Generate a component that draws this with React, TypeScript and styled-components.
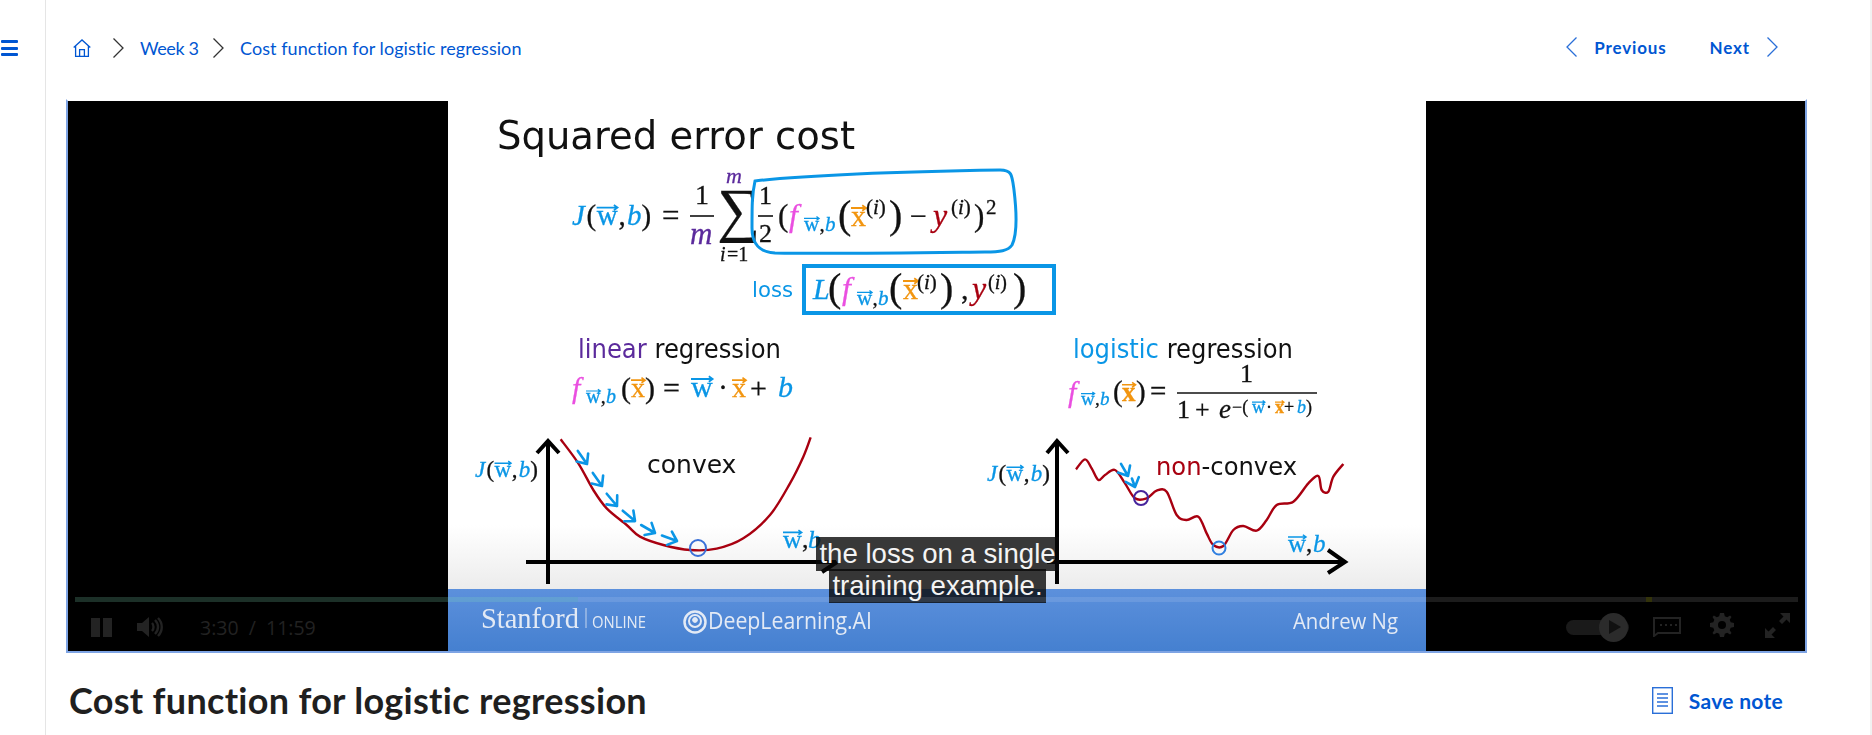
import React from 'react';
import styled, { createGlobalStyle } from 'styled-components';

const Global = createGlobalStyle`
  html, body { margin: 0; padding: 0; background: #fff; height: 735px; overflow: hidden; }
  * { box-sizing: border-box; }
`;

const BLUE = '#0056d2';
const CY = '#0a96e6';
const MAG = '#ea4fe0';
const ORG = '#f2950f';
const RED = '#a80010';
const PUR = '#5b2a9c';

const Page = styled.div`
  display: flex;
  width: 1872px;
  height: 735px;
  overflow: hidden;
  font-family: 'Lato', 'Noto Sans', sans-serif;
  border-right: 2px solid #f1f1f1;
`;
const Sidebar = styled.aside`
  width: 46px;
  flex: none;
  border-right: 1px solid #e5e5e5;
  padding: 40px 0 0 1px;
`;
const Burger = styled.div`
  width: 17px;
  height: 16px;
  display: flex;
  flex-direction: column;
  justify-content: space-between;
  & > i { display: block; height: 3px; background: ${BLUE}; border-radius: 1px; }
`;
const Main = styled.main`
  flex: 1;
  padding: 0 63px 0 20px;
  min-width: 0;
`;
const TopBar = styled.nav`
  height: 99px;
  display: flex;
  align-items: center;
  justify-content: space-between;
  padding: 0 29px 3px 7px;
`;
const Crumbs = styled.div`
  display: flex;
  align-items: center;
  font-size: 18px;
  color: ${BLUE};
`;
const CrumbText = styled.span<{ $w: number; $ls: number }>`
  width: ${p => p.$w}px;
  letter-spacing: ${p => p.$ls}px;
  white-space: nowrap;
`;
const Sep = styled.svg<{ $ml: number }>`
  width: 11px;
  height: 20px;
  margin: 0 16px 0 ${p => p.$ml}px;
  flex: none;
`;
const Pager = styled.div`
  display: flex;
  align-items: center;
  margin-bottom: 2px;
  color: ${BLUE};
  font-size: 17px;
  font-weight: 700;
  letter-spacing: 0.85px;
`;
const PagerLink = styled.span<{ $gap?: number }>`
  display: flex;
  align-items: center;
  gap: 17px;
  margin-left: ${p => p.$gap ?? 0}px;
`;
const Frame = styled.section`
  position: relative;
  height: 554px;
  background: #000;
  border: 2px solid #7ea4e4;
  border-top-color: #fff;
  display: flex;
  justify-content: center;
  overflow: hidden;
`;
const Slide = styled.svg`
  width: 978px;
  height: 550px;
  flex: none;
  display: block;
  filter: blur(0.35px);
`;
const Caption = styled.div`
  position: absolute;
  left: 2px;
  right: 0;
  bottom: 50px;
  text-align: center;
  font: 27.6px/31.5px 'Liberation Sans', Arial, sans-serif;
  color: #f4f4f4;
  & > span {
    background: rgba(8, 8, 8, 0.8);
    padding: 1px 3px 2px;
    -webkit-box-decoration-break: clone;
    box-decoration-break: clone;
  }
`;
const Progress = styled.div`
  position: absolute;
  left: 7px;
  right: 7px;
  top: 496px;
  height: 5px;
  background: rgba(255, 255, 255, 0.11);
`;
const Played = styled.div`
  position: absolute;
  left: 0;
  top: 0;
  bottom: 0;
  background: rgba(30, 200, 130, 0.12);
`;
const Buffer = styled.div`
  position: absolute;
  left: 1571px;
  top: 0;
  bottom: 0;
  width: 6px;
  background: #33330a;
`;
const Controls = styled.div`
  position: absolute;
  left: 23px;
  right: 15px;
  bottom: 10px;
  height: 28px;
  display: flex;
  align-items: center;
  justify-content: space-between;
  color: #232323;
`;
const Group = styled.div`
  display: flex;
  align-items: center;
`;
const Time = styled.span`
  font: 19.5px 'Open Sans', sans-serif;
  margin-left: 35px;
  white-space: pre;
  color: #222;
`;
const SpeedTrack = styled.div`
  position: relative;
  width: 63px;
  height: 15px;
  border-radius: 8px;
  background: #1a1a1a;
  margin-right: 24px;
`;
const SpeedKnob = styled.div`
  position: absolute;
  right: 1px;
  top: -7px;
  width: 29px;
  height: 29px;
  border-radius: 50%;
  background: #2b2b2b;
  display: flex;
  align-items: center;
  justify-content: center;
  &::after {
    content: '';
    margin-left: 3px;
    border-left: 12px solid #111;
    border-top: 7px solid transparent;
    border-bottom: 7px solid transparent;
  }
`;
const CcIcon = styled.svg`
  margin-right: 29px;
`;
const GearIcon = styled.svg`
  margin: 0 31px 4px 0;
`;
const ExpandIcon = styled.svg`
  margin-bottom: 3px;
`;
const SpeakerIcon = styled.svg`
  margin-left: 25px;
`;
const TitleRow = styled.div`
  display: flex;
  align-items: center;
  justify-content: space-between;
  padding: 25px 24px 0 3px;
`;
const Title = styled.h1`
  margin: 0;
  font-size: 36px;
  line-height: 44px;
  font-weight: 700;
  letter-spacing: 0.3px;
  color: #1f1f1f;
  white-space: nowrap;
`;
const SaveNote = styled.span`
  display: flex;
  align-items: center;
  gap: 16px;
  color: ${BLUE};
  font-size: 21px;
  font-weight: 700;
  letter-spacing: 0.3px;
`;

const SANS = "'DejaVu Sans', Verdana, sans-serif";
const SERIF = "'Liberation Serif', 'Times New Roman', serif";

const M = styled.text<{ $c?: string; $s?: number; $i?: boolean; $b?: boolean }>`
  font-family: ${SERIF};
  font-size: ${p => p.$s ?? 27}px;
  font-style: ${p => (p.$i ? 'italic' : 'normal')};
  font-weight: ${p => (p.$b ? 700 : 400)};
  fill: ${p => p.$c ?? '#111'};
  stroke: ${p => p.$c ?? '#111'};
  stroke-width: 0.3px;
`;
const S = styled.text<{ $s: number }>`
  font-family: ${SANS};
  font-size: ${p => p.$s}px;
  fill: #111;
`;
const Foot = styled.text<{ $s: number; $f?: string }>`
  font-family: ${p => p.$f ?? "'Open Sans', sans-serif"};
  font-size: ${p => p.$s}px;
  fill: #e3eaf5;
`;

type P = [number, number];
const smooth = (pts: P[]) => {
  let d = `M${pts[0][0]} ${pts[0][1]}`;
  for (let i = 0; i < pts.length - 1; i++) {
    const a = pts[Math.max(0, i - 1)], b = pts[i], c = pts[i + 1], e = pts[Math.min(pts.length - 1, i + 2)];
    d += `C${b[0] + (c[0] - a[0]) / 6} ${b[1] + (c[1] - a[1]) / 6} ${c[0] - (e[0] - b[0]) / 6} ${c[1] - (e[1] - b[1]) / 6} ${c[0]} ${c[1]}`;
  }
  return d;
};
const fromZoom = (ox: number, pts: P[]): P[] => pts.map(([x, y]) => [ox + x / 3, 320 + y / 3]);

const leftCurve = fromZoom(450, [[332,358],[385,430],[430,510],[470,565],[530,615],[570,650],[640,675],[720,690],[800,686],[880,655],[960,585],[1020,490],[1060,410],[1082,352]]);
const rightCurve = fromZoom(950, [[378,448],[405,418],[425,445],[445,480],[465,465],[495,450],[525,490],[555,535],[590,535],[620,512],[650,515],[680,585],[710,600],[745,590],[770,640],[790,675],[820,678],[850,630],[880,618],[920,632],[950,600],[980,555],[1030,545],[1075,490],[1105,468],[1115,510],[1135,515],[1150,470],[1180,432]]);

const Chev = ({ x, y, a, l = 16 }: { x: number; y: number; a: number; l?: number }) => (
  <g transform={`translate(${x} ${y}) rotate(${a})`} fill="none" stroke={CY} strokeWidth="2.6" strokeLinecap="round" strokeLinejoin="round">
    <path d={`M${-l} 0L0 0M-8 -7L0 0L-8 7`} />
  </g>
);
const Arrowed = ({ x, y, t, s = 27, c = CY, b }: { x: number; y: number; t: string; s?: number; c?: string; b?: boolean }) => {
  const w = s * (t === 'w' ? 0.72 : 0.5);
  const ay = y - s * 0.6;
  const h = s * 0.09;
  return (
    <g>
      <M x={x} y={y} $c={c} $s={s} $b={b}>{t}</M>
      <path d={`M${x} ${ay}H${x + w}M${x + w - h * 1.4} ${ay - h}L${x + w} ${ay}L${x + w - h * 1.4} ${ay + h}`} fill="none" stroke={c} strokeWidth={Math.max(1.2, s * 0.06)} />
    </g>
  );
};
const Sub = ({ x, y, s = 20 }: { x: number; y: number; s?: number }) => (
  <g>
    <Arrowed x={x} y={y} t="w" s={s} />
    <M x={x + s * 0.74} y={y} $c="#111" $s={s}>,</M>
    <M x={x + s * 1.0} y={y} $c={CY} $s={s} $i>b</M>
  </g>
);
const JFn = ({ x, y, s = 22 }: { x: number; y: number; s?: number }) => (
  <g>
    <M x={x} y={y} $c={CY} $s={s} $i>J</M>
    <M x={x + s * 0.5} y={y} $s={s}>(</M>
    <Arrowed x={x + s * 0.85} y={y} t="w" s={s} />
    <M x={x + s * 1.6} y={y} $s={s}>,</M>
    <M x={x + s * 1.9} y={y} $c={CY} $s={s} $i>b</M>
    <M x={x + s * 2.4} y={y} $s={s}>)</M>
  </g>
);

const SlideArt = () => (
  <Slide viewBox="448 101 978 550" aria-label="Squared error cost slide">
    <defs>
      <linearGradient id="fade" x1="0" y1="0" x2="0" y2="1">
        <stop offset="0" stopColor="#fff" />
        <stop offset="1" stopColor="#ececec" />
      </linearGradient>
      <linearGradient id="band" x1="0" y1="0" x2="0" y2="1">
        <stop offset="0" stopColor="#5c90dc" />
        <stop offset="1" stopColor="#4580d0" />
      </linearGradient>
    </defs>
    <rect x="448" y="101" width="978" height="550" fill="#fff" />
    <rect x="448" y="525" width="978" height="64" fill="url(#fade)" />
    <rect x="448" y="589" width="978" height="62" fill="url(#band)" />

    <S x="497" y="149" $s={39} textLength={358} lengthAdjust="spacingAndGlyphs">Squared error cost</S>

    {/* cost formula */}
    <JFn x={572} y={225} s={29} />
    <M x={662} y={226} $s={31}>=</M>
    <M x={695} y={204} $s={28}>1</M>
    <path d="M690 216H714" stroke="#111" strokeWidth="1.6" />
    <M x={690} y={244} $c={PUR} $s={31} $i>m</M>
    <M x={717} y={230} $s={60}>∑</M>
    <M x={726} y={183} $c={PUR} $s={22} $i>m</M>
    <M x={720} y={261} $s={20} $i>i</M>
    <M x={727} y={261} $s={20}>=1</M>
    <path d="M755 181C800 176 880 172 1000 170C1012 170 1012 175 1014 190C1017 215 1017 235 1012 245C1008 251 1000 252 985 252C900 253 830 254 775 253C760 252 752 245 752 228C752 205 752 195 755 181Z" fill="none" stroke={CY} strokeWidth="3" />
    <M x={759} y={204} $s={26}>1</M>
    <path d="M758 216H773" stroke="#111" strokeWidth="1.6" />
    <M x={759} y={242} $s={26}>2</M>
    <M x={778} y={226} $s={31}>(</M>
    <M x={789} y={226} $c={MAG} $s={32} $i>f</M>
    <Sub x={804} y={231} s={21} />
    <M x={838} y={228} $s={40}>(</M>
    <Arrowed x={851} y={226} t="x" s={30} c={ORG} />
    <M x={866} y={214} $s={21}>(<tspan fontStyle="italic">i</tspan>)</M>
    <M x={889} y={228} $s={40}>)</M>
    <M x={910} y={226} $s={30}>−</M>
    <M x={933} y={226} $c={RED} $s={32} $i>y</M>
    <M x={951} y={214} $s={21}>(<tspan fontStyle="italic">i</tspan>)</M>
    <M x={974} y={226} $s={31}>)</M>
    <M x={986} y={214} $s={21}>2</M>

    {/* loss box */}
    <text x="752" y="297" fontFamily="'DejaVu Sans', sans-serif" fontSize="21" fill={CY} textLength={41} lengthAdjust="spacingAndGlyphs">loss</text>
    <rect x="804" y="266" width="250" height="47" fill="none" stroke={CY} strokeWidth="4" />
    <M x={813} y={299} $c={CY} $s={30} $i>L</M>
    <M x={828} y={301} $s={40}>(</M>
    <M x={842} y={299} $c={MAG} $s={32} $i>f</M>
    <Sub x={857} y={305} s={21} />
    <M x={889} y={301} $s={40}>(</M>
    <Arrowed x={903} y={299} t="x" s={30} c={ORG} />
    <M x={917} y={289} $s={21}>(<tspan fontStyle="italic">i</tspan>)</M>
    <M x={940} y={301} $s={40}>)</M>
    <M x={961} y={299} $s={30}>,</M>
    <M x={972} y={299} $c={RED} $s={32} $i>y</M>
    <M x={988} y={289} $s={20}>(<tspan fontStyle="italic">i</tspan>)</M>
    <M x={1013} y={301} $s={40}>)</M>

    {/* headings */}
    <S x="578" y="358" $s={26} textLength={203} lengthAdjust="spacingAndGlyphs"><tspan fill={PUR}>linear</tspan> regression</S>
    <S x="1073" y="358" $s={26} textLength={220} lengthAdjust="spacingAndGlyphs"><tspan fill={CY}>logistic</tspan> regression</S>

    {/* linear formula */}
    <M x={572} y={398} $c={MAG} $s={30} $i>f</M>
    <Sub x={586} y={403} s={20} />
    <M x={621} y={398} $s={30}>(</M>
    <Arrowed x={631} y={397} t="x" s={28} c={ORG} />
    <M x={645} y={398} $s={30}>)</M>
    <M x={663} y={398} $s={30}>=</M>
    <Arrowed x={691} y={397} t="w" s={30} />
    <M x={718} y={397} $s={30}>·</M>
    <Arrowed x={732} y={397} t="x" s={28} c={ORG} />
    <M x={750} y={398} $s={30}>+</M>
    <M x={778} y={397} $c={CY} $s={30} $i>b</M>

    {/* logistic formula */}
    <M x={1068} y={402} $c={MAG} $s={30} $i>f</M>
    <Sub x={1081} y={405} s={19} />
    <M x={1113} y={401} $s={29}>(</M>
    <Arrowed x={1122} y={401} t="x" s={27} c={ORG} b />
    <M x={1136} y={401} $s={29}>)</M>
    <M x={1150} y={401} $s={29}>=</M>
    <M x={1240} y={382} $s={26}>1</M>
    <path d="M1177 393H1317" stroke="#111" strokeWidth="1.6" />
    <M x={1177} y={418} $s={26}>1</M>
    <M x={1195} y={418} $s={26}>+</M>
    <M x={1219} y={418} $s={27} $i>e</M>
    <M x={1232} y={413} $s={18}>−(</M>
    <Arrowed x={1252} y={413} t="w" s={18} />
    <M x={1266} y={413} $s={18}>·</M>
    <Arrowed x={1275} y={413} t="x" s={18} c={ORG} b />
    <M x={1284} y={413} $s={18}>+</M>
    <M x={1297} y={413} $c={CY} $s={18} $i>b</M>
    <M x={1306} y={413} $s={18}>)</M>

    {/* left plot */}
    <g fill="none" stroke="#000" strokeWidth="4">
      <path d="M548 441V584M537 453L548 441L559 453" />
      <path d="M526 562H836M822 572L837 562" />
    </g>
    <JFn x={475} y={477} s={23} />
    <path d={smooth(leftCurve)} fill="none" stroke={RED} strokeWidth="2.4" />
    <S x="647" y="473" $s={25}>convex</S>
    <Chev x={587} y={464} a={55} />
    <Chev x={602} y={486} a={55} />
    <Chev x={617} y={506} a={50} />
    <Chev x={635} y={521} a={40} />
    <Chev x={655} y={533} a={30} />
    <Chev x={677} y={541} a={20} />
    <circle cx="698" cy="548" r="8" fill="none" stroke="#3a70d8" strokeWidth="2" />
    <Arrowed x={783} y={548} t="w" s={26} />
    <M x={802} y={548} $s={26}>,</M>
    <M x={808} y={548} $c={CY} $s={26} $i>b</M>

    {/* right plot */}
    <g fill="none" stroke="#000" strokeWidth="4">
      <path d="M1057 441V584M1047 453L1057 441L1068 453" />
      <path d="M1047 562H1344M1328 550L1345 562L1328 573" />
    </g>
    <JFn x={987} y={481} s={23} />
    <path d={smooth(rightCurve)} fill="none" stroke={RED} strokeWidth="2.4" />
    <S x="1156" y="475" $s={25} textLength={141} lengthAdjust="spacingAndGlyphs"><tspan fill={RED}>non</tspan>-convex</S>
    <Chev x={1128} y={476} a={60} l={14} />
    <Chev x={1135} y={487} a={70} l={9} />
    <circle cx="1141" cy="498" r="7" fill="none" stroke="#46249c" strokeWidth="2" />
    <circle cx="1219" cy="548" r="6.5" fill="none" stroke="#2f7fe0" strokeWidth="2" />
    <Arrowed x={1288} y={552} t="w" s={25} />
    <M x={1306} y={552} $s={25}>,</M>
    <M x={1313} y={552} $c={CY} $s={25} $i>b</M>

    {/* footer brand */}
    <Foot x="481" y="628" $s={29} $f="'Liberation Serif', serif" textLength={98} lengthAdjust="spacingAndGlyphs">Stanford</Foot>
    <path d="M586 608V628" stroke="#c6d6ee" strokeWidth="1" />
    <Foot x="592" y="628" $s={16} textLength={54} lengthAdjust="spacingAndGlyphs">ONLINE</Foot>
    <g fill="none" stroke="#e3eaf5">
      <circle cx="695" cy="622" r="10.5" strokeWidth="2.5" />
      <circle cx="695" cy="621" r="6" strokeWidth="2" />
      <circle cx="695" cy="620" r="2.4" fill="#e3eaf5" />
    </g>
    <Foot x="708" y="629" $s={23} textLength={164} lengthAdjust="spacingAndGlyphs">DeepLearning.AI</Foot>
    <Foot x="1293" y="629" $s={21} textLength={105} lengthAdjust="spacingAndGlyphs">Andrew Ng</Foot>
  </Slide>
);

const Chevron = ({ ml }: { ml: number }) => (
  <Sep $ml={ml} viewBox="0 0 11 20" fill="none" stroke="#333" strokeWidth="1.3">
    <path d="M.5 .5L10 10L.5 19.5" />
  </Sep>
);
const PageChev = styled.svg`
  width: 11px;
  height: 20px;
  flex: none;
`;

export default function App() {
  return (
    <>
      <Global />
      <Page>
        <Sidebar>
          <Burger><i /><i /><i /></Burger>
        </Sidebar>
        <Main>
          <TopBar>
            <Crumbs>
              <svg width="18" height="18" viewBox="0 0 18 18" fill="none" stroke={BLUE} strokeWidth="1.3">
                <path d="M.7 8.5L9 .9L17.3 8.5M2.6 7V17.3H15.4V7M6.6 17.3V10.6H11.4V17.3" />
              </svg>
              <Chevron ml={22} />
              <CrumbText $w={57} $ls={-0.4}>Week 3</CrumbText>
              <Chevron ml={16} />
              <CrumbText $w={281} $ls={0.06}>Cost function for logistic regression</CrumbText>
            </Crumbs>
            <Pager>
              <PagerLink>
                <PageChev viewBox="0 0 11 20" fill="none" stroke="#2a6fd8" strokeWidth="1.3"><path d="M10.5 .5L1 10L10.5 19.5" /></PageChev>
                Previous
              </PagerLink>
              <PagerLink $gap={43}>
                Next
                <PageChev viewBox="0 0 11 20" fill="none" stroke="#2a6fd8" strokeWidth="1.3"><path d="M.5 .5L10 10L.5 19.5" /></PageChev>
              </PagerLink>
            </Pager>
          </TopBar>
          <Frame>
            <SlideArt />
            <Caption><span>the loss on a single<br />training example.</span></Caption>
            <Progress>
              <Played style={{ width: `${(210 / 719) * 100}%` }} />
              <Buffer />
            </Progress>
            <Controls>
              <Group>
                <svg width="21" height="19" viewBox="0 0 21 19" fill="currentColor"><rect width="9" height="19" /><rect x="12" width="9" height="19" /></svg>
                <SpeakerIcon width="28" height="22" viewBox="0 0 28 22" fill="none" stroke="currentColor">
                  <path d="M0 7H5L12 1V21L5 15H0Z" fill="currentColor" stroke="none" />
                  <path d="M15 7C17 9 17 13 15 15M18 4C22 8 22 14 18 18M21 2C26 7 26 15 21 20" strokeWidth="2.4" />
                </SpeakerIcon>
                <Time>3:30  /  11:59</Time>
              </Group>
              <Group>
                <SpeedTrack><SpeedKnob /></SpeedTrack>
                <CcIcon width="28" height="20" viewBox="0 0 28 20" fill="none" stroke="currentColor" strokeWidth="2">
                  <path d="M1 1H27V16H5L1 19Z" />
                  <path d="M7 8H9M12 8H14M17 8H19M22 8H24" strokeWidth="2" />
                </CcIcon>
                <GearIcon width="24" height="24" viewBox="0 0 24 24" fill="currentColor">
                  <path fillRule="evenodd" d="M10 0H14L14.8 3.3L17.2 4.3L20.1 2.5L21.5 3.9L19.7 6.8L20.7 9.2L24 10V14L20.7 14.8L19.7 17.2L21.5 20.1L20.1 21.5L17.2 19.7L14.8 20.7L14 24H10L9.2 20.7L6.8 19.7L3.9 21.5L2.5 20.1L4.3 17.2L3.3 14.8L0 14V10L3.3 9.2L4.3 6.8L2.5 3.9L3.9 2.5L6.8 4.3L9.2 3.3ZM12 8A4 4 0 1 0 12 16A4 4 0 1 0 12 8Z" />
                </GearIcon>
                <ExpandIcon width="25" height="25" viewBox="0 0 25 25" fill="currentColor">
                  <path d="M25 0V10L21.5 6.5L17 11L14 8L18.5 3.5L15 0Z" />
                  <path d="M0 25V15L3.5 18.5L8 14L11 17L6.5 21.5L10 25Z" />
                </ExpandIcon>
              </Group>
            </Controls>
          </Frame>
          <TitleRow>
            <Title>Cost function for logistic regression</Title>
            <SaveNote>
              <svg width="21" height="27" viewBox="0 0 21 27" fill="none" stroke="#2a6fd8" strokeWidth="1.4">
                <rect x=".7" y=".7" width="19.6" height="25.6" />
                <path d="M5 7H16M5 11H16M5 15H16M5 19H16" />
              </svg>
              Save note
            </SaveNote>
          </TitleRow>
        </Main>
      </Page>
    </>
  );
}
